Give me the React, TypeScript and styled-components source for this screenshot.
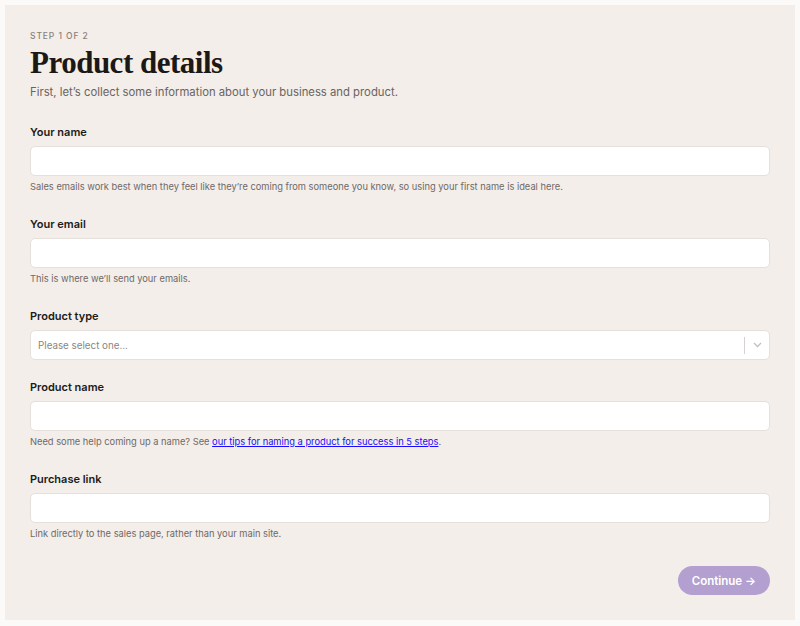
import styled, { createGlobalStyle } from 'styled-components';

const GlobalStyle = createGlobalStyle`
  html, body {
    margin: 0;
    padding: 0;
    background: #fbfaf9;
  }
  body {
    font-family: Inter, "Liberation Sans", sans-serif;
  }
  * {
    box-sizing: border-box;
  }
`;

const Page = styled.div`
  padding: 5px;
  width: 800px;
`;

const Card = styled.form`
  background: #f3eeea;
  padding: 25px;
  display: flex;
  flex-direction: column;
`;

const Step = styled.div`
  font-size: 8.5px;
  line-height: 12px;
  letter-spacing: 0.9px;
  font-weight: 500;
  color: #8d807b;
  text-transform: uppercase;
`;

const Title = styled.h1`
  margin: 3px 0 0;
  font-family: "Liberation Serif", "DejaVu Serif", serif;
  font-weight: 700;
  font-size: 31px;
  line-height: 36px;
  letter-spacing: -0.5px;
  color: #1c1815;
`;

const Subtitle = styled.p`
  margin: 2px 0 22px;
  font-size: 11.3px;
  line-height: 18px;
  color: #6a6360;
`;

const FieldList = styled.div`
  display: flex;
  flex-direction: column;
  gap: 18px;
`;

const Field = styled.div`
  display: flex;
  flex-direction: column;
`;

const Label = styled.label`
  font-size: 11px;
  line-height: 18px;
  font-weight: 600;
  color: #201b18;
  margin-bottom: 5px;
`;

const Input = styled.input`
  height: 30px;
  width: 100%;
  border: 1px solid #e6e0dc;
  border-radius: 5px;
  background: #ffffff;
  padding: 0 7px;
  font: inherit;
  font-size: 10.5px;
  outline: none;
`;

const SelectBox = styled.div`
  height: 30px;
  display: flex;
  align-items: center;
  border: 1px solid #e6e0dc;
  border-radius: 5px;
  background: #ffffff;
`;

const Placeholder = styled.span`
  flex: 1;
  padding-left: 7px;
  font-size: 9.8px;
  color: #8a8582;
`;

const Separator = styled.span`
  width: 1px;
  height: 17px;
  background: #d6d1ce;
`;

const Chevron = styled.span`
  width: 24px;
  display: flex;
  justify-content: center;
  align-items: center;
  color: #c4bfbc;
`;

const Help = styled.p`
  margin: 4px 0 3px;
  font-size: 9.3px;
  line-height: 14px;
  color: #6f6966;
`;

const HelpLink = styled.a`
  color: #1a0dff;
  text-decoration: underline;
`;

const Footer = styled.div`
  display: flex;
  justify-content: flex-end;
  margin-top: 22px;
`;

const ContinueButton = styled.button`
  height: 29px;
  padding: 0 14px;
  border: none;
  border-radius: 15px;
  background: #b3a0d0;
  color: #ffffff;
  font-family: inherit;
  font-size: 11.5px;
  font-weight: 600;
  cursor: not-allowed;
`;

type TextFieldProps = {
  label: string;
  help?: React.ReactNode;
};

const TextField = ({ label, help }: TextFieldProps) => (
  <Field>
    <Label>{label}</Label>
    <Input type="text" />
    {help && <Help>{help}</Help>}
  </Field>
);

const App = () => {
  return (
    <Page>
      <GlobalStyle />
      <Card>
        <Step>Step 1 of 2</Step>
        <Title>Product details</Title>
        <Subtitle>First, let’s collect some information about your business and product.</Subtitle>

        <FieldList>
          <TextField
            label="Your name"
            help="Sales emails work best when they feel like they’re coming from someone you know, so using your first name is ideal here."
          />
          <TextField label="Your email" help="This is where we’ll send your emails." />

          <Field>
            <Label>Product type</Label>
            <SelectBox>
              <Placeholder>Please select one...</Placeholder>
              <Separator />
              <Chevron>
                <svg width="9" height="6" viewBox="0 0 9 6" fill="none">
                  <path d="M1 1l3.5 3.5L8 1" stroke="currentColor" strokeWidth="1.3" />
                </svg>
              </Chevron>
            </SelectBox>
          </Field>

          <TextField
            label="Product name"
            help={
              <>
                Need some help coming up a name? See{' '}
                <HelpLink href="#">our tips for naming a product for success in 5 steps</HelpLink>.
              </>
            }
          />
          <TextField label="Purchase link" help="Link directly to the sales page, rather than your main site." />
        </FieldList>

        <Footer>
          <ContinueButton type="button">Continue →</ContinueButton>
        </Footer>
      </Card>
    </Page>
  );
};

export default App;
